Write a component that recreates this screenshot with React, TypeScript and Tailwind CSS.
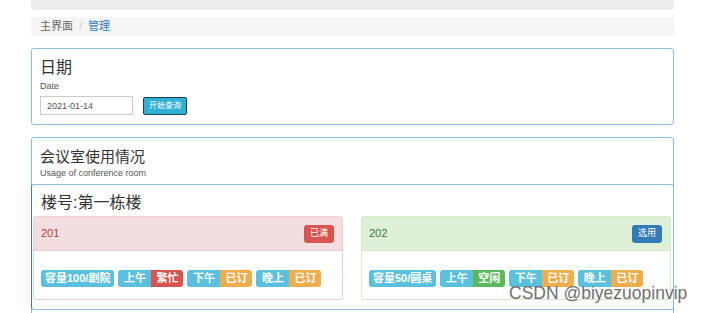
import React from "react";

type Slot = { name: string; state: string; color: string };

interface Room {
  no: string;
  cap: string;
  full: boolean;
  slots: Slot[];
}

const rooms: Room[] = [
  {
    no: "201",
    cap: "容量100/剧院",
    full: true,
    slots: [
      { name: "上午", state: "繁忙", color: "bg-[#d9534f]" },
      { name: "下午", state: "已订", color: "bg-[#f0ad4e]" },
      { name: "晚上", state: "已订", color: "bg-[#f0ad4e]" },
    ],
  },
  {
    no: "202",
    cap: "容量50/圆桌",
    full: false,
    slots: [
      { name: "上午", state: "空闲", color: "bg-[#5cb85c]" },
      { name: "下午", state: "已订", color: "bg-[#f0ad4e]" },
      { name: "晚上", state: "已订", color: "bg-[#f0ad4e]" },
    ],
  },
];

const font = "font-['Liberation_Sans','Noto_Sans_CJK_SC',sans-serif]";

function RoomCard({ room }: { room: Room }) {
  const head = room.full
    ? "bg-[#f2dede] text-[#a94442] border-[#ebccd1]"
    : "bg-[#dff0d8] text-[#3c763d] border-[#d6e9c6]";
  return (
    <div className={`w-[310px] h-[84px] border rounded-[3px] bg-white ${room.full ? "border-[#ebccd1]" : "border-[#d6e9c6]"}`}>
      <div className={`h-[34px] flex items-center justify-between pl-[7px] pr-[8px] border-b ${head}`}>
        <span className="text-[11px]">{room.no}</span>
        <button
          className={`h-[18px] px-[6px] rounded-[3px] text-white text-[9px] leading-none ${room.full ? "bg-[#d9534f]" : "bg-[#337ab7]"}`}
        >
          {room.full ? "已满" : "选用"}
        </button>
      </div>
      <div className="flex items-center gap-[4px] pl-[7px] pt-[19px]">
        <span className="h-[17px] px-[4px] flex items-center rounded-[3px] bg-[#5bc0de] text-white text-[11px] font-bold">
          {room.cap}
        </span>
        {room.slots.map((s, i) => (
          <span key={i} className="flex">
            <span className="h-[17px] w-[33px] flex items-center justify-center rounded-l-[3px] bg-[#5bc0de] text-white text-[11px] font-bold">
              {s.name}
            </span>
            <span className={`h-[17px] w-[32px] flex items-center justify-center rounded-r-[3px] text-white text-[11px] font-bold ${s.color}`}>
              {s.state}
            </span>
          </span>
        ))}
      </div>
    </div>
  );
}

export default function App() {
  return (
    <div className={`relative w-[704px] h-[313px] overflow-hidden bg-white ${font}`}>
      <div className="ml-[31px] w-[643px]">
        <div className="h-[10px] bg-[#ebebeb] rounded-b-[4px]" />
        <div className="mt-[7px] h-[19px] bg-[#f5f5f5] rounded-[3px] flex items-center pl-[9px] text-[11px]">
          <span className="text-[#666]">主界面</span>
          <span className="text-[#ccc] px-[6px]">/</span>
          <span className="text-[#337ab7]">管理</span>
        </div>

        <div className="mt-[12px] h-[77px] border border-[#8fbbe0] rounded-[3px] pl-[8px] pt-[9px]">
          <div className="text-[16px] leading-[20px] text-[#333]">日期</div>
          <div className="text-[9px] leading-[10px] mt-[3px] text-[#555]">Date</div>
          <div className="flex items-center mt-[5px]">
            <input
              readOnly
              value="2021-01-14"
              className="w-[93px] h-[19px] border border-[#ccc] px-[6px] text-[9px] text-[#555] outline-none"
            />
            <button className="ml-[10px] h-[18px] px-[5px] bg-[#31b0d5] border border-[#1d3f4e] rounded-[2px] text-white text-[8px] leading-none">
              开始查询
            </button>
          </div>
        </div>

        <div className="mt-[12px] h-[200px] border border-[#8fbbe0] rounded-[3px]">
          <div className="pl-[8px] pt-[9px] h-[46px]">
            <div className="text-[15px] leading-[19px] text-[#333]">会议室使用情况</div>
            <div className="text-[9px] leading-[10px] mt-[2px] text-[#555]">Usage of conference room</div>
          </div>
          <div className="-ml-px -mr-px h-[126px] border border-[#8fbbe0] border-l-[#3a7bbf] rounded-[3px]">
            <div className="pl-[9px] pt-[8px] h-[31px] text-[16px] leading-[20px] text-[#333]">楼号:第一栋楼</div>
            <div className="flex gap-[18px] pl-[1px]">
              {rooms.map((r) => (
                <RoomCard key={r.no} room={r} />
              ))}
            </div>
          </div>
        </div>
      </div>
      <div className="absolute left-[509px] top-[283px] text-[17.5px] leading-[20px] text-[#707070] font-['Liberation_Sans',sans-serif]">
        CSDN @biyezuopinvip
      </div>
    </div>
  );
}
